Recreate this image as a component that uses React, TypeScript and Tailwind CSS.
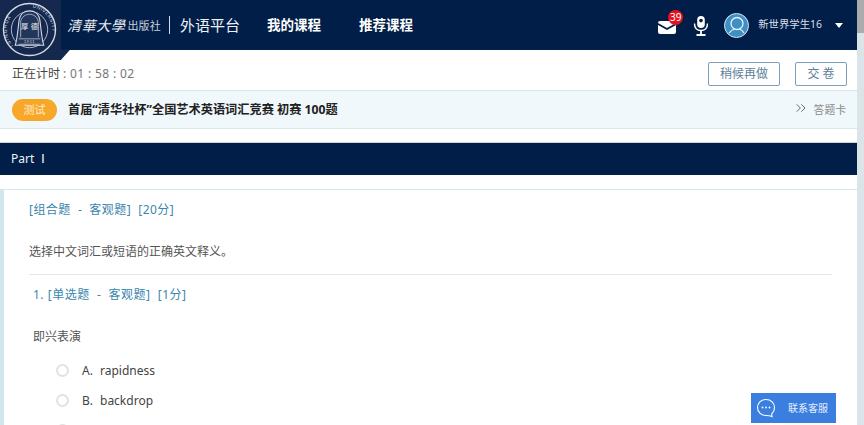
import { ChevronsRight } from 'lucide-react';

const font = { fontFamily: '"Noto Sans", "Noto Sans CJK SC", sans-serif' };
const serif = { fontFamily: '"Noto Sans CJK SC", serif' };

const Seal = () => (
  <svg width="55" height="55" viewBox="0 0 56 56">
    <circle cx="28" cy="28" r="26.5" fill="#15294f" stroke="#d5dbe5" strokeWidth="1.4" />
    <circle cx="28" cy="28" r="18.5" fill="none" stroke="#d5dbe5" strokeWidth="0.8" />
    <defs>
      <path id="sealLeft" d="M 12 45 A 23 23 0 0 1 28 5.5" />
      <path id="sealRight" d="M 28 5.5 A 23 23 0 0 1 44 45" />
    </defs>
    <text fontSize="5" fill="#d5dbe5" fontFamily="Liberation Sans, sans-serif" letterSpacing="0.9">
      <textPath href="#sealLeft">TSINGHUA</textPath>
    </text>
    <text fontSize="5" fill="#d5dbe5" fontFamily="Liberation Sans, sans-serif" letterSpacing="0.5">
      <textPath href="#sealRight" startOffset="3">UNIVERSITY</textPath>
    </text>
    <path d="M13.5 44 C16 36 16.5 24 17.5 18 C18.5 12 23 9 28 9 C33 9 37.5 12 38.5 18 C39.5 24 40 36 42.5 44 Z" fill="#22365b" stroke="#d5dbe5" strokeWidth="1.1" />
    <path d="M19 36 V20 C20 15 24 12.5 28 12.5 C32 12.5 36 15 37 20 V36" fill="none" stroke="#d5dbe5" strokeWidth="0.7" />
    <text x="23" y="27" textAnchor="middle" fontSize="7.5" fill="#eef1f5" fontFamily="Noto Sans CJK SC, serif">厚</text>
    <text x="33" y="27" textAnchor="middle" fontSize="7.5" fill="#eef1f5" fontFamily="Noto Sans CJK SC, serif">德</text>
    <path d="M17 37.5 H39 M17 43 H39" stroke="#d5dbe5" strokeWidth="0.7" />
    <text x="28" y="42" textAnchor="middle" fontSize="4.2" fill="#d5dbe5" fontFamily="Liberation Sans, sans-serif" letterSpacing="0.6">1911</text>
  </svg>
);

const Radio = () => <span className="w-[13px] h-[13px] -mt-[2px] rounded-full border-2 border-[#e2e2e2] bg-white shrink-0" />;

const Option = ({ label, text }: { label: string; text: string }) => (
  <div className="flex items-center h-[30px] pl-[52px] text-[12px] text-[#444]">
    <Radio />
    <span className="ml-[13px] w-[18px]">{label}</span>
    <span>{text}</span>
  </div>
);

export default function App() {
  return (
    <div className="relative flex w-[864px] h-[425px] overflow-hidden bg-white" style={font}>
      <div className="relative flex-1 min-w-0 flex flex-col">
        <header className="relative flex items-center h-[50px] bg-[#001e48] text-white shrink-0">
          <div className="absolute z-10 left-0 top-0 w-[70px] h-[60px] bg-[#15294f] [clip-path:polygon(0_0,87%_0,87%_83%,100%_83%,87%_100%,0_100%)]" />
          <div className="absolute z-20 left-[2px] top-[2px]"><Seal /></div>
          <div className="ml-[67px] flex items-center">
            <span className="text-[14px] italic tracking-[0.6px] text-[#e8ebf0]" style={serif}>清華大學</span>
            <span className="ml-[2px] text-[11px] tracking-[0.2px] text-[#c9d0db]" style={serif}>出版社</span>
            <span className="ml-[8px] mr-[10px] w-px h-[18px] bg-[#d5dbe5]" />
            <span className="text-[15px] text-[#eef1f5]">外语平台</span>
          </div>
          <nav className="ml-[27px] flex gap-[38px] text-[13.5px] font-bold">
            <span>我的课程</span>
            <span>推荐课程</span>
          </nav>
          <div className="ml-auto flex items-center pr-[14px]">
            <div className="relative mr-[17px] mt-[4px]">
              <svg width="18" height="13" viewBox="0 0 18 13" className="block">
                <path d="M0 2 Q0 0 2 0 H16 Q18 0 18 2 L9 7 Z" fill="#fff" />
                <path d="M0 4 L9 9 L18 4 V11 Q18 13 16 13 H2 Q0 13 0 11 Z" fill="#fff" />
              </svg>
              <span className="absolute -top-[11px] left-[10px] w-[15px] h-[15px] rounded-full bg-[#e8121d] text-[10px] leading-[15px] text-center text-white">39</span>
            </div>
            <svg width="16" height="22" viewBox="0 0 16 22" className="mr-[15px] mt-[1px]">
              <rect x="4.2" y="1" width="7.6" height="12" rx="3.8" fill="#fff" />
              <circle cx="8" cy="5.6" r="1.8" fill="#001e48" />
              <path d="M1.5 8.5 C1.5 13 4 15.5 8 15.5 C12 15.5 14.5 13 14.5 8.5" fill="none" stroke="#fff" strokeWidth="1.4" />
              <path d="M8 15.5 V19 M3.5 20 H12.5" stroke="#fff" strokeWidth="1.8" />
            </svg>
            <svg width="25" height="25" viewBox="0 0 25 25">
              <circle cx="12.5" cy="12.5" r="12" fill="#3d8fc4" stroke="#dbe6ef" strokeWidth="1" />
              <circle cx="13" cy="10.5" r="6" fill="none" stroke="#e8f0f6" strokeWidth="1.3" />
              <path d="M5 20 C7 17.5 9 16.5 11 16 M15 16 C17 16.5 19 18 20 20" fill="none" stroke="#e8f0f6" strokeWidth="1.2" />
            </svg>
            <span className="ml-[9px] text-[10.4px] text-[#d9dfe8]">新世界学生16</span>
            <span className="ml-[13px] w-0 h-0 border-x-[4.5px] border-x-transparent border-t-[5px] border-t-white" />
          </div>
        </header>

        <div className="flex items-center h-[40px] shrink-0 pt-[8px] text-[12px] text-[#777] pl-[12px] pr-[10px]">
          <span className="text-[#444]">正在计时</span>
          <span className="ml-[3px] tracking-[0.35px]">: 01 : 58 : 02</span>
          <button className="ml-auto w-[72px] h-[24px] border border-[#7ba0bd] rounded-[2px] text-[#5d7f99]">稍候再做</button>
          <button className="ml-[15px] w-[52px] h-[24px] border border-[#7ba0bd] rounded-[2px] text-[#5d7f99]">交 卷</button>
        </div>

        <div className="flex items-center h-[39px] shrink-0 bg-[#f0f8fc] border-y border-[#d8e6ee] pl-[12px] pr-[11px]">
          <span className="w-[45px] h-[22px] rounded-full bg-[#f7a829] text-[#fdeacb] text-[11px] leading-[22px] text-center">测试</span>
          <span className="ml-[11px] mt-[2px] text-[12.2px] font-bold text-[#222]">首届“清华社杯”全国艺术英语词汇竞赛 初赛 100题</span>
          <ChevronsRight className="ml-auto w-[16px] h-[16px] text-[#666] -translate-y-[2px]" strokeWidth={1.5} />
          <span className="ml-[5px] mt-[2px] text-[10.8px] text-[#8a8a8a]">答题卡</span>
        </div>

        <div className="mt-[13px] flex items-center h-[33px] shrink-0 bg-[#001e48] border-t border-[#c9d3dd] pl-[11px] text-[12px] text-[#eef1f5]">
          <span>Part</span>
          <span className="ml-[7px] text-[13px]" style={{ fontFamily: '"DejaVu Sans Mono", monospace' }}>Ⅰ</span>
        </div>

        <section className="mt-[14px] flex-1 border-t border-[#d8e6ee] border-l-[4px] border-l-[#d2e6f0] text-[12px]">
          <div className="pl-[25px] pt-[11px] text-[#3b86ad] whitespace-pre tracking-[0.45px]">[组合题  -  客观题]  [20分]</div>
          <div className="ml-[25px] mr-[25px] mt-[24px] pb-[13px] border-b border-[#e6e6e6] text-[#555]">选择中文词汇或短语的正确英文释义。</div>
          <div className="pl-[29px] pt-[11px] text-[#3b86ad] whitespace-pre tracking-[0.5px]">1. [单选题  -  客观题]  [1分]</div>
          <div className="pl-[29px] pt-[24px] pb-[10px] text-[#555]">即兴表演</div>
          <Option label="A." text="rapidness" />
          <Option label="B." text="backdrop" />
          <Option label="" text="" />
        </section>

        <div className="absolute right-[21px] bottom-[2px] flex items-center w-[85px] h-[30px] bg-[#3a7fe0] text-white">
          <svg width="20" height="20" viewBox="0 0 20 20" className="ml-[5px]">
            <path d="M10 1.5 C5 1.5 1.5 5 1.5 9.5 C1.5 14 5 17.5 10 17.5 C11.5 17.5 13.5 17.5 16 18.5 C15.5 17 15.8 16 16 15.5 C17.6 14 18.5 12 18.5 9.5 C18.5 5 15 1.5 10 1.5 Z" fill="none" stroke="#fff" strokeWidth="1.1" />
            <circle cx="6.5" cy="9.5" r="0.9" fill="#fff" />
            <circle cx="10" cy="9.5" r="0.9" fill="#fff" />
            <circle cx="13.5" cy="9.5" r="0.9" fill="#fff" />
          </svg>
          <span className="ml-[12px] text-[10px] text-[#e6eefb]">联系客服</span>
        </div>
      </div>

      <div className="w-[7px] shrink-0 bg-[#dbe4e8]">
        <div className="h-[33px] bg-[#a9abad]" />
      </div>
    </div>
  );
}
